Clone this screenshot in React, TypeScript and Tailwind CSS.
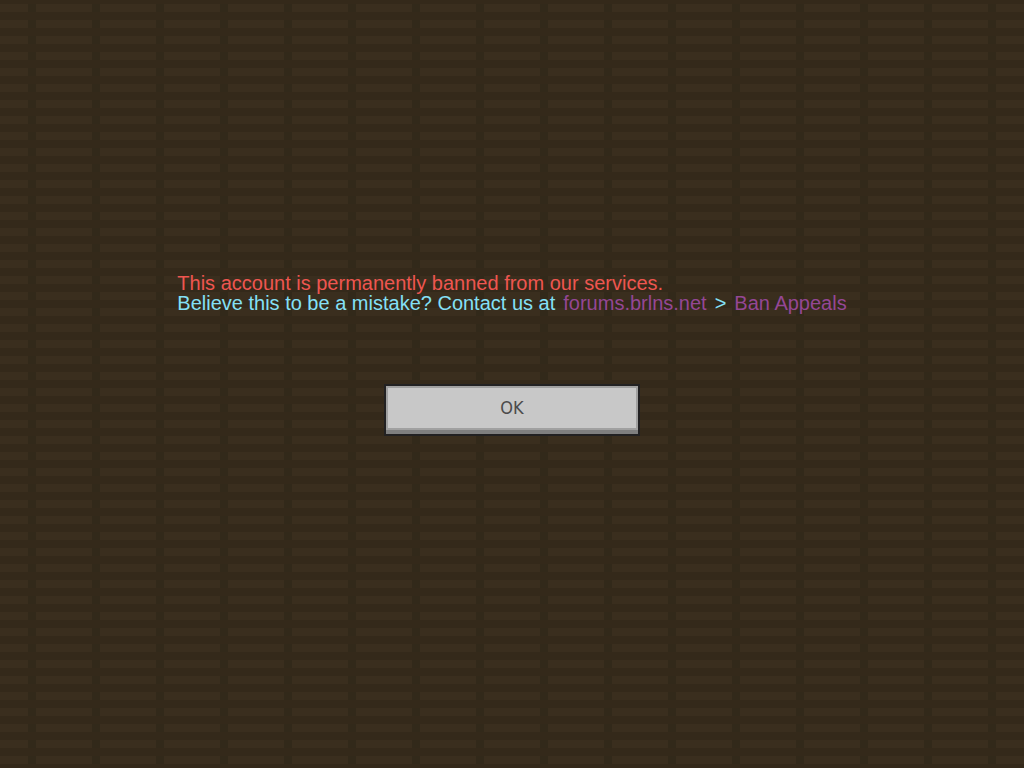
const planks =
  "bg-[#32291a] bg-[length:64px_16px] bg-[position:36px_4px] bg-[image:linear-gradient(to_bottom,transparent_8px,#34291a_8px),linear-gradient(to_right,#3a2e1e_56px,#32291a_56px)]";

export default function App() {
  return (
    <main
      className={`flex min-h-screen flex-col items-center justify-center gap-[71px] px-4 pb-[59px] font-['Liberation_Sans',Arial,sans-serif] ${planks}`}
    >
      <div className="text-[20px] leading-[20px]">
        <p className="text-[#ee5650]">This account is permanently banned from our services.</p>
        <p className="flex flex-wrap gap-x-2 text-[#84e0f7]">
          <span>Believe this to be a mistake? Contact us at</span>
          <span className="text-[#944795]">forums.brlns.net</span>
          <span>&gt;</span>
          <span className="text-[#944795]">Ban Appeals</span>
        </p>
      </div>
      <button
        type="button"
        className="w-64 max-w-full border-2 border-[#222122] bg-[#7f7f7f] pb-1"
      >
        <span className="flex h-11 items-center justify-center border-2 border-[#a0a0a0] bg-[#c8c8c8] font-['DejaVu_Sans_Condensed','DejaVu_Sans',sans-serif] text-[18px] leading-[20px] text-[#4c4c4c]">
          OK
        </span>
      </button>
    </main>
  );
}
